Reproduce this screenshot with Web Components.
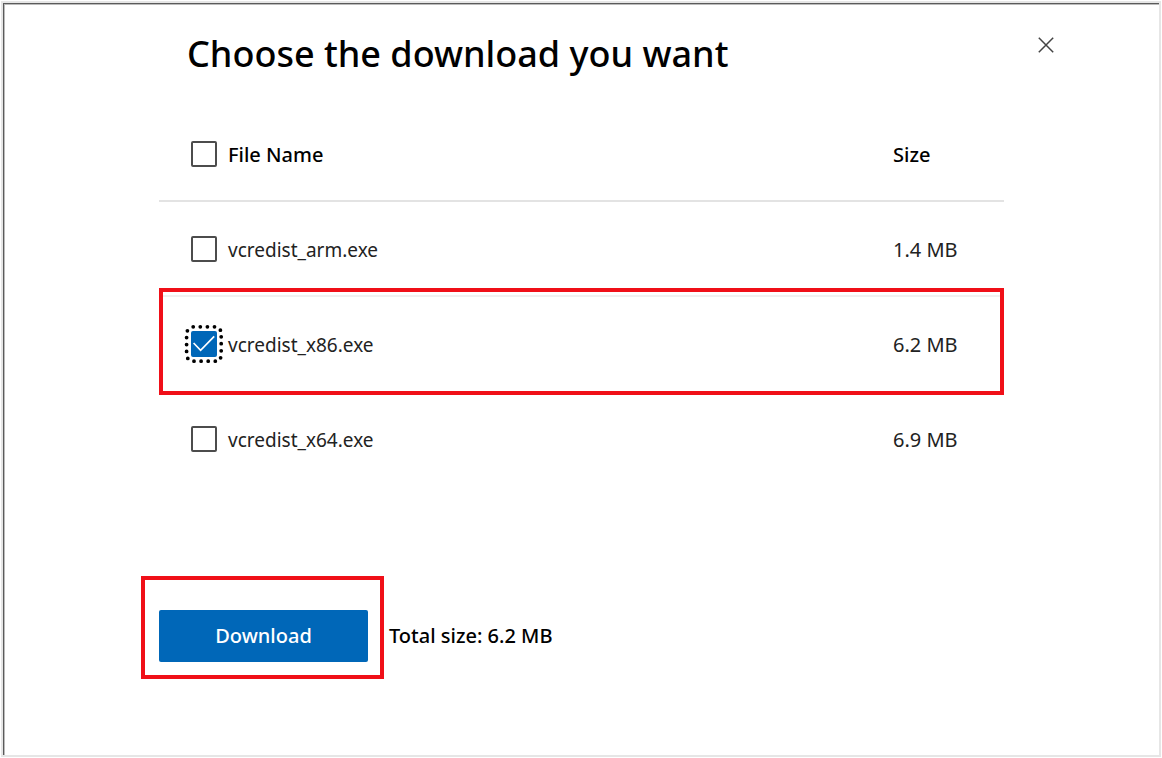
<!DOCTYPE html>
<html lang="en">
<head>
<meta charset="utf-8">
<meta name="viewport" content="width=device-width, initial-scale=1">
<title>Choose the download you want</title>
<style>
  body {
    margin: 0;
    background: #fff;
    color: #000;
    font: 20px/28px "Noto Sans", "Open Sans", sans-serif;
  }
</style>
</head>
<body>
<download-dialog>
  <span slot="title">Choose the download you want</span>
  <file-table></file-table>
  <download-bar total="6.2 MB">Download</download-bar>
</download-dialog>

<template id="dialog-template">
  <style>
    :host {
      display: block;
      box-sizing: border-box;
      min-height: calc(100vh - 2px);
      margin: 1px;
      border: 2px solid #e6e6e6;
    }
    .panel {
      box-sizing: border-box;
      min-height: calc(100vh - 6px);
      border-top: 1px solid #5a5a5a;
      border-left: 1px solid #5a5a5a;
      box-shadow: inset 1px 1px #bbb;
      display: grid;
      grid-template-columns: 1fr minmax(0, 845px) 1fr;
      grid-template-rows: 103px 1fr;
    }
    h1 {
      grid-column: 2;
      align-self: center;
      margin: 0;
      padding: 0 0 4px 28px;
      font-size: 36px;
      line-height: 48px;
      font-weight: 500;
    }
    button {
      grid-column: 3;
      justify-self: start;
      margin: 25px 0 0 26px;
      width: 32px;
      height: 32px;
      padding: 0;
      border: 0;
      background: none;
      display: grid;
      place-items: center;
      cursor: pointer;
    }
    .content { grid-column: 2; }
  </style>
  <section class="panel" role="dialog" aria-labelledby="heading">
    <h1 id="heading"><slot name="title"></slot></h1>
    <button type="button" aria-label="Close">
      <svg width="16" height="16" viewBox="0 0 16 16" fill="none" stroke="#444" stroke-width="1.5"><path d="M.8.8l14.4 14.4M15.2.8L.8 15.2"/></svg>
    </button>
    <div class="content"><slot></slot></div>
  </section>
</template>

<template id="mark-template">
  <style>
    :host {
      display: block;
      position: absolute;
      inset: var(--mark-inset, 0);
      border: 4px solid #f00f18;
      pointer-events: none;
    }
  </style>
</template>

<template id="table-template">
  <style>
    :host { display: block; }
    table { width: 100%; border-collapse: separate; border-spacing: 0; table-layout: fixed; }
    th, td { box-sizing: border-box; height: 95px; padding: 0; text-align: left; vertical-align: middle; font-weight: 400; color: #222; }
    td { font-size: 19px; }
    thead th { box-shadow: inset 0 -2px #e3e3e3; font-weight: 500; color: #000; }
    tbody tr:first-child > * { box-shadow: inset 0 -2px #f0f0f0; }
    .size { width: 111px; }
    td.size { font-size: 20px; }
    label { display: flex; align-items: center; gap: 11px; padding-left: 32px; }
    .box { display: grid; width: 26px; height: 26px; margin-bottom: 2px; }
    .box > * { grid-area: 1 / 1; }
    input {
      appearance: none;
      box-sizing: border-box;
      width: 26px;
      height: 26px;
      margin: 0;
      border: 2px solid #4c4c4c;
      border-radius: 2px;
      background: #fff;
    }
    input:checked { background: #0067b8; border-color: #0067b8; }
    svg { display: none; pointer-events: none; overflow: visible; z-index: 1; }
    input:checked ~ svg { display: block; }
    tr { position: relative; --mark-inset: -9px 0 -3px 0; }
  </style>
  <table>
    <thead>
      <tr>
        <th scope="col"><label><span class="box"><input type="checkbox"></span>File Name</label></th>
        <th scope="col" class="size">Size</th>
      </tr>
    </thead>
    <tbody></tbody>
  </table>
</template>

<template id="row-template">
  <tr>
    <td><label><span class="box"><input type="checkbox"><svg width="26" height="26" viewBox="0 0 26 26" fill="none"><path d="M2.6 12l7 7.3L23.2 5.4" stroke="#fff" stroke-width="1.7"/><g fill="none" stroke="#000" stroke-width="3.8" stroke-linecap="round"><path d="M2.2-4.2h22" stroke-dasharray="0 7.1"/><path d="M-3.6-.2v.01M-4.4 6.6v.01M-4.4 13.6v.01M-4.4 20.4v.01M-3.2 27.4v.01"/><path d="M29.4-.8v.01M30.2 5.8v.01M30.2 12.7v.01M30.2 19.8v.01M29.6 26.8v.01"/><path d="M3 30.2h22" stroke-dasharray="0 7.1"/></g></svg></span><span class="name"></span></label></td>
    <td class="size"></td>
  </tr>
</template>

<template id="bar-template">
  <style>
    :host { display: flex; align-items: center; gap: 21px; margin-top: 123px; font-weight: 500; }
    .action { position: relative; --mark-inset: -34px -16px -17px -18px; }
    button {
      display: block;
      width: 209px;
      height: 52px;
      padding: 0;
      border: 0;
      border-radius: 2px;
      background: #0067b8;
      color: #fff;
      font: inherit;
      cursor: pointer;
    }
    p { margin: 0; }
  </style>
  <div class="action"><button type="button"><slot></slot></button><highlight-mark></highlight-mark></div>
  <p>Total size: <span class="total"></span></p>
</template>

<script>
  class TemplateElement extends HTMLElement {
    constructor() {
      super();
      const template = document.getElementById(this.constructor.template);
      this.attachShadow({ mode: "open" }).append(template.content.cloneNode(true));
    }
  }

  class HighlightMark extends TemplateElement {
    static template = "mark-template";
  }

  class DownloadDialog extends TemplateElement {
    static template = "dialog-template";
  }

  class FileTable extends TemplateElement {
    static template = "table-template";
    static files = [
      { name: "vcredist_arm.exe", size: "1.4 MB" },
      { name: "vcredist_x86.exe", size: "6.2 MB", selected: true },
      { name: "vcredist_x64.exe", size: "6.9 MB" }
    ];
    connectedCallback() {
      const body = this.shadowRoot.querySelector("tbody");
      const template = document.getElementById("row-template");
      body.replaceChildren();
      for (const file of FileTable.files) {
        const row = template.content.cloneNode(true).querySelector("tr");
        row.querySelector(".name").textContent = file.name;
        row.querySelector(".size").textContent = file.size;
        row.querySelector("input").checked = Boolean(file.selected);
        if (file.selected) {
          row.querySelector(".size").append(document.createElement("highlight-mark"));
        }
        body.append(row);
      }
    }
  }

  class DownloadBar extends TemplateElement {
    static template = "bar-template";
    connectedCallback() {
      this.shadowRoot.querySelector(".total").textContent = this.getAttribute("total");
    }
  }

  customElements.define("highlight-mark", HighlightMark);
  customElements.define("file-table", FileTable);
  customElements.define("download-bar", DownloadBar);
  customElements.define("download-dialog", DownloadDialog);
</script>
</body>
</html>
